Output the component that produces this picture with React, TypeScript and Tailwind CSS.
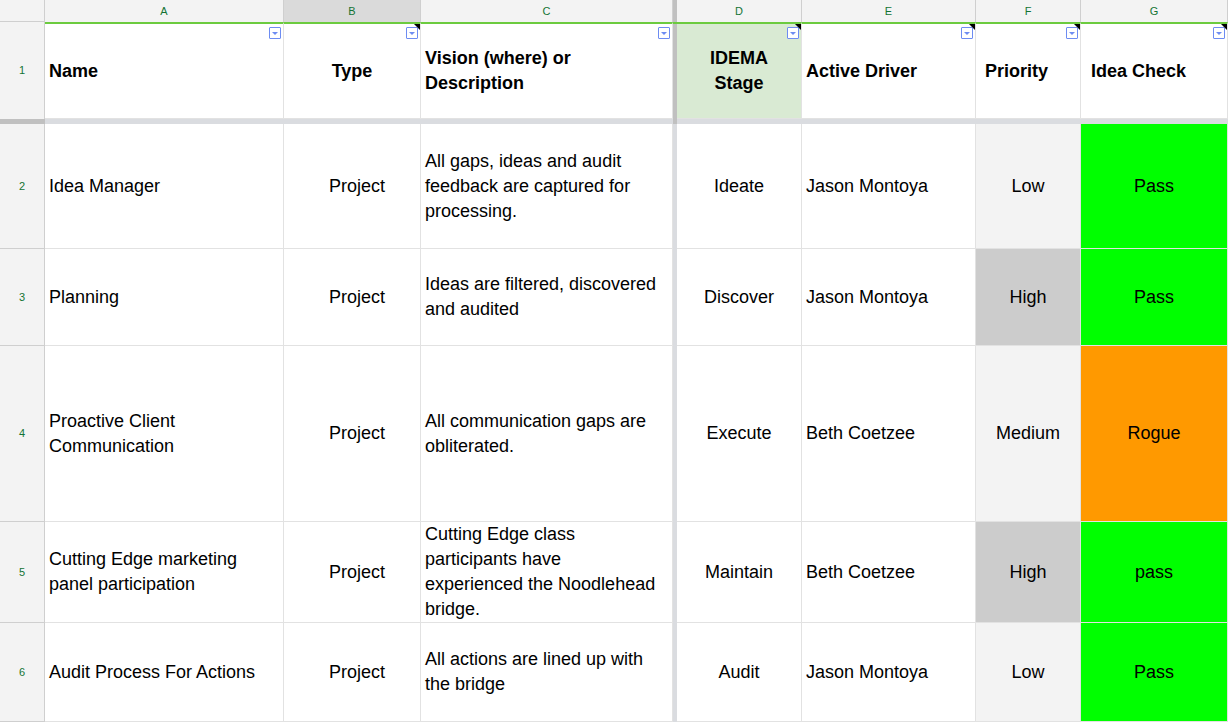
import React from "react";

const cols = ["A", "B", "C", "", "D", "E", "F", "G"];
const widths = "45px 239px 137px 252px 4px 125px 174px 105px 147px";

type Row = { h: number; cells: string[]; pri: string; check: string };
const rows: Row[] = [
  { h: 125, cells: ["Idea Manager", "Project", "All gaps, ideas and audit feedback are captured for processing.", "Ideate", "Jason Montoya", "Low", "Pass"], pri: "bg-[#f3f3f3]", check: "bg-[#00ff00]" },
  { h: 97, cells: ["Planning", "Project", "Ideas are filtered, discovered and audited", "Discover", "Jason Montoya", "High", "Pass"], pri: "bg-[#cccccc]", check: "bg-[#00ff00]" },
  { h: 176, cells: ["Proactive Client Communication", "Project", "All communication gaps are obliterated.", "Execute", "Beth Coetzee", "Medium", "Rogue"], pri: "bg-[#f3f3f3]", check: "bg-[#ff9900]" },
  { h: 101, cells: ["Cutting Edge marketing panel participation", "Project", "Cutting Edge class participants have experienced the Noodlehead bridge.", "Maintain", "Beth Coetzee", "High", "pass"], pri: "bg-[#cccccc]", check: "bg-[#00ff00]" },
  { h: 99, cells: ["Audit Process For Actions", "Project", "All actions are lined up with the bridge", "Audit", "Jason Montoya", "Low", "Pass"], pri: "bg-[#f3f3f3]", check: "bg-[#00ff00]" },
];

function Filter({ note }: { note?: boolean }) {
  return (
    <>
      <div className="absolute right-[2px] top-[3px] w-[12px] h-[12px] border border-[#6d8cf2] bg-white rounded-[1px] flex items-center justify-center">
        <div className="w-0 h-0 border-l-[3px] border-r-[3px] border-t-[3px] border-l-transparent border-r-transparent border-t-[#6d8cf2]" />
      </div>
      {note && (
        <div className="absolute right-0 top-0 w-0 h-0 border-l-[6px] border-b-[6px] border-l-transparent border-b-transparent border-t-0 border-r-0" style={{ borderTop: "6px solid black", borderLeft: "6px solid transparent" }} />
      )}
    </>
  );
}

export default function App() {
  const base = "relative border-r border-b border-[#e2e2e2] flex items-center text-[18px] leading-[25px] text-black";
  return (
    <div className="w-[1229px] h-[722px] overflow-hidden bg-white" style={{ fontFamily: "Arial, 'Liberation Sans', sans-serif" }}>
      <div className="grid" style={{ gridTemplateColumns: widths }}>
        {/* column header */}
        <div className="h-[22px] bg-[#f3f3f3] border-r border-b border-[#cfcfcf]" />
        {cols.map((c, i) =>
          c === "" ? (
            <div key={i} className="h-[22px] bg-[#c0c0c0]" />
          ) : (
            <div key={i} className={`h-[22px] flex items-center justify-center text-[11px] text-[#137333] border-r border-[#cfcfcf] ${c === "B" ? "bg-[#dadada]" : "bg-[#f3f3f3]"}`}>{c}</div>
          )
        )}
        {/* header row */}
        <div className="h-[97px] bg-[#f3f3f3] border-r border-[#cfcfcf] flex items-center justify-center text-[11px] text-[#137333]">1</div>
        <div className={`${base} border-t-2 border-t-[#6ccb3f] font-bold pl-[4px]`}>Name<Filter /></div>
        <div className={`${base} border-t-2 border-t-[#6ccb3f] font-bold justify-center`}>Type<Filter note /></div>
        <div className={`${base} border-t-2 border-t-[#6ccb3f] font-bold pl-[4px]`}><span>Vision (where) or<br />Description</span><Filter /></div>
        <div className="bg-[#c0c0c0] border-t-2 border-t-[#6ccb3f]" />
        <div className={`${base} border-t-2 border-t-[#6ccb3f] font-bold justify-center text-center bg-[#d9ead3]`}><span>IDEMA<br />Stage</span><Filter note /></div>
        <div className={`${base} border-t-2 border-t-[#6ccb3f] font-bold pl-[4px]`}>Active Driver<Filter note /></div>
        <div className={`${base} border-t-2 border-t-[#6ccb3f] font-bold pl-[9px]`}>Priority<Filter note /></div>
        <div className={`${base} border-t-2 border-t-[#6ccb3f] font-bold pl-[10px]`}>Idea Check<Filter note /></div>
        {/* frozen divider */}
        <div className="h-[5px] bg-[#c0c0c0]" />
        <div className="h-[5px] bg-[#dadce0] col-span-3" />
        <div className="h-[5px] bg-[#c0c0c0]" />
        <div className="h-[5px] bg-[#dadce0] col-span-4" />
        {rows.map((r, ri) => (
          <React.Fragment key={ri}>
            <div style={{ height: r.h }} className="bg-[#f3f3f3] border-r border-b border-[#cfcfcf] flex items-center justify-center text-[11px] text-[#137333]">{ri + 2}</div>
            <div className={`${base} pl-[4px] pr-[4px]`}>{r.cells[0]}</div>
            <div className={`${base} justify-end pr-[35px]`}>{r.cells[1]}</div>
            <div className={`${base} pl-[4px] pr-[8px]`}>{r.cells[2]}</div>
            <div className="bg-[#dadce0]" />
            <div className={`${base} justify-center`}>{r.cells[3]}</div>
            <div className={`${base} pl-[4px]`}>{r.cells[4]}</div>
            <div className={`${base} justify-center ${r.pri}`}>{r.cells[5]}</div>
            <div className={`${base} justify-center ${r.check}`}>{r.cells[6]}</div>
          </React.Fragment>
        ))}
      </div>
    </div>
  );
}
